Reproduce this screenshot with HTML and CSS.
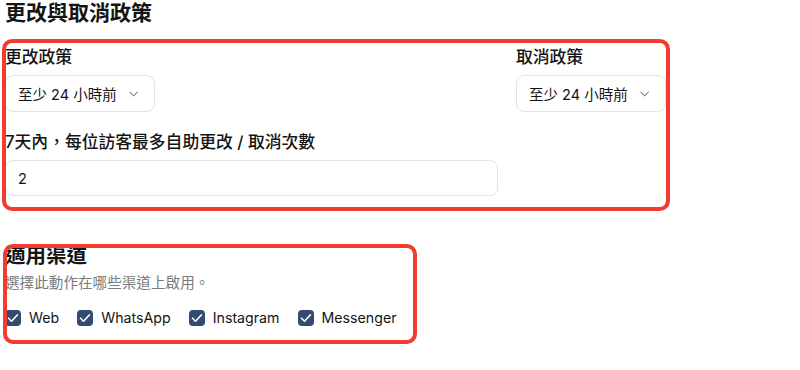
FILE: index.html
```html
<!DOCTYPE html>
<html lang="zh-Hant">
<head>
  <meta charset="UTF-8" />
  <meta name="viewport" content="width=device-width, initial-scale=1.0"/>
  <title>更改與取消政策</title>
  <link rel="stylesheet" href="styles.css">
</head>
<body>

  <h2 class="title">更改與取消政策</h2>

  <!-- Policy fields -->
  <section class="policy">
    <div class="field">
      <label>更改政策</label>
      <div class="select">
        <span>至少 24 小時前</span>
        <svg width="10" height="6" viewBox="0 0 10 6"><path d="M1 1l4 4 4-4" fill="none" stroke="#8a8a8a" stroke-width="1.2" stroke-linecap="round" stroke-linejoin="round"/></svg>
      </div>
    </div>
    <div class="field">
      <label>取消政策</label>
      <div class="select">
        <span>至少 24 小時前</span>
        <svg width="10" height="6" viewBox="0 0 10 6"><path d="M1 1l4 4 4-4" fill="none" stroke="#8a8a8a" stroke-width="1.2" stroke-linecap="round" stroke-linejoin="round"/></svg>
      </div>
    </div>
    <div class="field wide">
      <label>7天內，每位訪客最多自助更改 / 取消次數</label>
      <input class="input" type="text" value="2">
    </div>
    <div class="mark mark-policy"></div>
  </section>

  <!-- Channels -->
  <section class="channels">
    <h3>適用渠道</h3>
    <p class="hint">選擇此動作在哪些渠道上啟用。</p>
    <div class="checks">
      <label class="check"><span class="box"><svg width="12" height="10" viewBox="0 0 12 10"><path d="M1.5 5.2l3 3 6-6.4" fill="none" stroke="#fff" stroke-width="1.6" stroke-linecap="round" stroke-linejoin="round"/></svg></span>Web</label>
      <label class="check"><span class="box"><svg width="12" height="10" viewBox="0 0 12 10"><path d="M1.5 5.2l3 3 6-6.4" fill="none" stroke="#fff" stroke-width="1.6" stroke-linecap="round" stroke-linejoin="round"/></svg></span>WhatsApp</label>
      <label class="check"><span class="box"><svg width="12" height="10" viewBox="0 0 12 10"><path d="M1.5 5.2l3 3 6-6.4" fill="none" stroke="#fff" stroke-width="1.6" stroke-linecap="round" stroke-linejoin="round"/></svg></span>Instagram</label>
      <label class="check"><span class="box"><svg width="12" height="10" viewBox="0 0 12 10"><path d="M1.5 5.2l3 3 6-6.4" fill="none" stroke="#fff" stroke-width="1.6" stroke-linecap="round" stroke-linejoin="round"/></svg></span>Messenger</label>
    </div>
    <div class="mark mark-channels"></div>
  </section>

</body>
</html>
```

FILE: styles.css
```css
body {
  margin: 0;
  padding: 0 0 0 5px;
  min-height: 370px;
  box-sizing: border-box;
  background-color: #fff;
  color: #141414;
  font-family: Inter, "Noto Sans CJK TC", sans-serif;
}
.title {
  margin: 0;
  font-size: 21px;
  line-height: 26px;
  font-weight: 700;
}
.policy {
  position: relative;
  margin-top: 19px;
  display: grid;
  grid-template-columns: 493px 150px;
  column-gap: 18px;
  row-gap: 18px;
  width: 661px;
}
.field label {
  display: block;
  font-size: 16.8px;
  line-height: 24px;
  font-weight: 500;
  margin-bottom: 6px;
}
.field.wide {
  grid-column: 1;
}
.select {
  box-sizing: border-box;
  width: 150px;
  height: 37px;
  display: flex;
  align-items: center;
  gap: 12px;
  padding: 0 16px 0 12px;
  border: 1px solid #e4e4e7;
  border-radius: 8px;
  font-size: 14.5px;
  white-space: nowrap;
}
.input {
  box-sizing: border-box;
  display: block;
  width: 100%;
  height: 36px;
  padding: 0 12px;
  border: 1px solid #e4e4e7;
  border-radius: 8px;
  font-family: inherit;
  font-size: 14.5px;
  color: #141414;
  outline: none;
}
.channels {
  position: relative;
  margin-top: 47px;
  padding-bottom: 14px;
  width: 406px;
}
.channels h3 {
  margin: 0 0 4px;
  font-size: 20.5px;
  line-height: 26px;
  font-weight: 700;
}
.hint {
  margin: 0;
  font-size: 14.6px;
  line-height: 20px;
  color: #7a7a7a;
}
.checks {
  display: flex;
  gap: 18px;
  margin-top: 15px;
}
.check {
  display: flex;
  align-items: center;
  gap: 8px;
  font-size: 14.2px;
  line-height: 20px;
}
.box {
  width: 16px;
  height: 16px;
  border-radius: 4px;
  background-color: #344a72;
  display: flex;
  align-items: center;
  justify-content: center;
}
.mark {
  position: absolute;
  border: 4px solid #f23c2f;
  border-radius: 10px;
  pointer-events: none;
}
.mark-policy {
  left: -3px;
  top: -6px;
  right: -4px;
  bottom: -15px;
}
.mark-channels {
  left: -2px;
  top: 1px;
  right: -6px;
  bottom: -2px;
}
```
